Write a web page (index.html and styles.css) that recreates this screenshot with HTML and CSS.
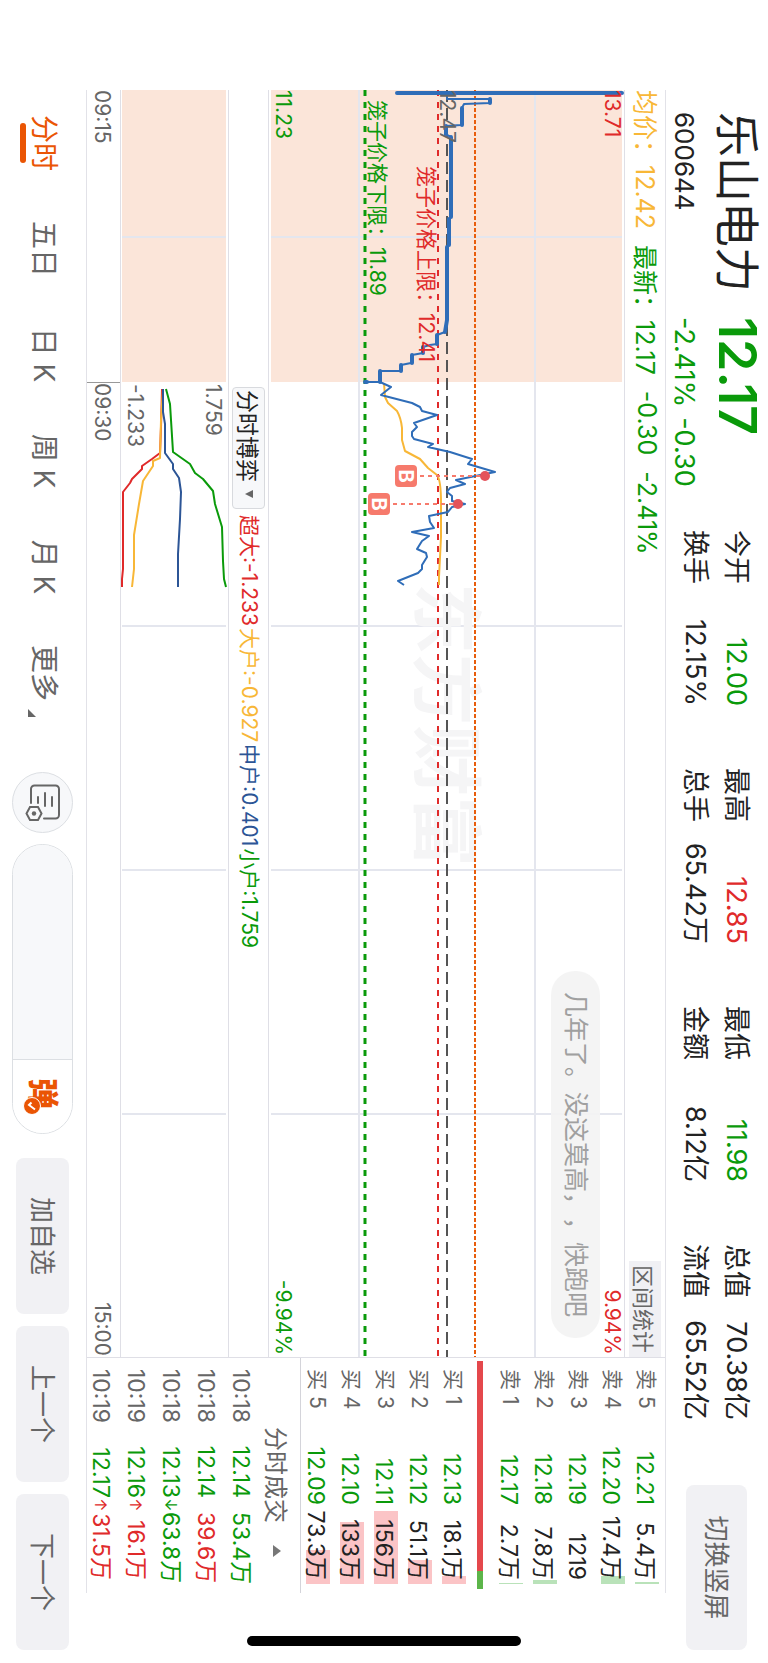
FILE: index.html
```html
<!doctype html>
<html lang="zh-CN">
<head>
  <title>乐山电力 600644</title>
  <meta charset="utf-8" />
  <meta name="viewport" content="width=device-width,initial-scale=1" />

  <link rel="stylesheet" href="styles.css">
</head>
<body>
  <div class="screen">
    <header class="header">
      <div class="quote">
        <h1 class="name">乐山电力</h1>
        <strong class="price down">12.17</strong>
        <span class="code">600644</span>
        <span class="change down"><span>-2.41%</span><span>-0.30</span></span>
      </div>

      <dl class="stats">
        <div><dt>今开</dt><dd class="down">12.00</dd></div>
        <div><dt>最高</dt><dd class="up">12.85</dd></div>
        <div><dt>最低</dt><dd class="down">11.98</dd></div>
        <div><dt>总值</dt><dd>70.38亿</dd></div>
        <div><dt>换手</dt><dd>12.15%</dd></div>
        <div><dt>总手</dt><dd>65.42万</dd></div>
        <div><dt>金额</dt><dd>8.12亿</dd></div>
        <div><dt>流值</dt><dd>65.52亿</dd></div>
      </dl>

      <button type="button" class="btn btn-rotate">切换竖屏</button>
    </header>

    <main class="main">
      <section class="charts">
        <div class="legend">
          <span class="avg">均价：12.42</span>
          <span class="down">最新：12.17</span>
          <span class="down">-0.30</span>
          <span class="down">-2.41%</span>
          <button type="button" class="btn-range">区间统计</button>
        </div>

        <div class="chart price-chart">
          <svg viewBox="0 0 1267 355" preserveAspectRatio="none" aria-hidden="true">
            <rect class="auction" x="0" y="2" width="292" height="351" />
            <path class="grid" d="M0 89H1267M0 265H1267M147 2V353M536 2V353M780 2V353M1024 2V353" />
            <text class="watermark" x="493" y="203">东方财富</text>
            <path class="limit-orange" d="M0 149H1267" />
            <path class="limit-red" d="M0 186H1267" />
            <path class="prev-close" d="M0 177H1267" />
            <path class="limit-green" d="M0 259H1267" />
            <path class="line avg-line" d="M293 240L307 239L313 236L321 227Q328 223 338 222L350 222L361 219L369 204L378 196L385 187Q390 183 413 183L447 183L487 185L495 185" />
            <path class="line blue" d="M4 177H9V134H13L14 160L18 162L35 163L36 178L45 177L47 173H127L129 175L155 176L157 177H230L242 179L245 187H254L255 194L257 201H263L265 212L273 213L275 223H281V244H292V259" />
            <path class="line blue thick" d="M3 2V227M9 134H13M18 162H35M36 178H45M47 173H127M129 175H155M157 177H230L242 179M245 187H254M257 201H263M265 212H273M275 223H281M281 244H292M292 257V259" />
            <path class="line blue" d="M292 244L297 233L305 243L313 212L317 204L321 202L325 187L333 210L337 207L342 212L346 212L349 210L354 191L357 196L362 174L369 152L374 156L382 129L390 168L394 159L398 174L402 177L406 172L411 172L414 159L417 172L422 176L426 195L432 194L438 190L442 212L446 195L451 202L459 207L463 198L467 197L475 202L479 202L483 206L491 226L495 220" />
            <g class="mark">
              <path d="M386 144V206M414 171V233" />
              <circle cx="386" cy="139" r="5" />
              <circle cx="414" cy="166" r="5" />
              <rect x="375" y="207" width="22" height="22" rx="4" />
              <rect x="403" y="234" width="22" height="22" rx="4" />
              <text x="386" y="225">B</text>
              <text x="414" y="252">B</text>
            </g>
          </svg>
          <span class="label top-left up">13.71</span>
          <span class="label top-right up">9.94%</span>
          <span class="label bottom-left down">11.23</span>
          <span class="label bottom-right down">-9.94%</span>
          <span class="label close-price">12.47</span>
          <span class="label cage-high up">笼子价格上限：12.41</span>
          <span class="label cage-low down">笼子价格下限：11.89</span>
          <p class="bullet">几年了。没这莫高，，快跑吧</p>
        </div>

        <div class="legend sub-legend">
          <button type="button" class="btn-index">分时博弈 <i class="caret"></i></button>
          <span class="up">超大:-1.233</span>
          <span class="avg">大户:-0.927</span>
          <span class="mid">中户:0.401</span>
          <span class="down">小户:1.759</span>
        </div>

        <div class="chart flow-chart">
          <svg viewBox="0 0 1267 107" preserveAspectRatio="none" aria-hidden="true">
            <rect class="auction" x="0" y="2" width="292" height="104" />
            <path class="grid" d="M147 2V106M536 2V106M780 2V106M1024 2V106" />
            <path class="line red" d="M299 66L337 67L363 68L369 76L376 86H379L389 96L393 98L402 105H479L489 106H497" />
            <path class="line avg-line" d="M299 65L330 67L368 68L371 75H376L391 85L414 89L445 94H479L497 96" />
            <path class="line navy" d="M299 65H322L334 63H363L374 55H379L388 49L402 47L429 48L464 50H497" />
            <path class="line green" d="M299 62L314 58L362 55L374 38L383 33L389 25L401 15L414 13L437 6L471 5L489 4L497 2" />
          </svg>
          <span class="label flow-high">1.759</span>
          <span class="label flow-low">-1.233</span>
        </div>

        <div class="axis">
          <span>09:15</span>
          <span class="open">09:30</span>
          <span class="close">15:00</span>
        </div>
      </section>

      <aside class="side">
        <table class="book">
          <tr><th>卖 5</th><td class="down">12.21</td><td class="vol ask" style="--depth:2px">5.4万</td></tr>
          <tr><th>卖 4</th><td class="down">12.20</td><td class="vol ask" style="--depth:8px">17.4万</td></tr>
          <tr><th>卖 3</th><td class="down">12.19</td><td class="vol ask" style="--depth:0px">1219</td></tr>
          <tr><th>卖 2</th><td class="down">12.18</td><td class="vol ask" style="--depth:4px">7.8万</td></tr>
          <tr><th>卖 1</th><td class="down">12.17</td><td class="vol ask" style="--depth:1px">2.7万</td></tr>
        </table>
        <div class="ratio"></div>
        <table class="book">
          <tr><th>买 1</th><td class="down">12.13</td><td class="vol bid" style="--depth:8px">18.1万</td></tr>
          <tr><th>买 2</th><td class="down">12.12</td><td class="vol bid" style="--depth:24px">51.1万</td></tr>
          <tr><th>买 3</th><td class="down">12.11</td><td class="vol bid" style="--depth:73px">156万</td></tr>
          <tr><th>买 4</th><td class="down">12.10</td><td class="vol bid" style="--depth:62px">133万</td></tr>
          <tr><th>买 5</th><td class="down">12.09</td><td class="vol bid" style="--depth:34px">73.3万</td></tr>
        </table>

        <h2 class="trades-title">分时成交 <i class="caret caret-up"></i></h2>
        <table class="trades">
          <tr><th>10:18</th><td class="down">12.14</td><td class="dir"></td><td class="down">53.4万</td></tr>
          <tr><th>10:18</th><td class="down">12.14</td><td class="dir"></td><td class="up">39.6万</td></tr>
          <tr><th>10:18</th><td class="down">12.13</td><td class="dir down">↓</td><td class="down">63.8万</td></tr>
          <tr><th>10:19</th><td class="down">12.16</td><td class="dir up">↑</td><td class="up">16.1万</td></tr>
          <tr><th>10:19</th><td class="down">12.17</td><td class="dir up">↑</td><td class="up">31.5万</td></tr>
        </table>
      </aside>
    </main>

    <footer class="footer">
      <nav class="tabs">
        <a href="#" class="active">分时</a>
        <a href="#">五日</a>
        <a href="#">日 K</a>
        <a href="#">周 K</a>
        <a href="#">月 K</a>
        <a href="#" class="more">更多</a>
      </nav>

      <button type="button" class="btn-note" aria-label="弹幕设置">
        <svg viewBox="0 0 37 36" width="37" height="36" aria-hidden="true">
          <path d="M19 30H5a3.5 3.5 0 0 1-3.5-3.5V5.5A3.5 3.5 0 0 1 5 2H31a3.5 3.5 0 0 1 3.5 3.5V17M13 9h9M9 16h13M13 23h6" />
          <path d="M29.500 19.500L36 23V31L29.500 34.500L23 31V23Z" />
          <circle cx="29.500" cy="27" r="2.200" />
        </svg>
      </button>

      <form class="barrage">
        <input type="text" aria-label="发弹幕">
        <button type="button" aria-label="弹幕开关">
          <span class="barrage-icon">弹<svg viewBox="0 0 18 18" width="18" height="18" aria-hidden="true"><circle cx="9" cy="9" r="8.500" /><path d="M5.500 9.500L8 12L12.500 6" /></svg></span>
        </button>
      </form>

      <div class="actions">
        <button type="button" class="btn">加自选</button>
        <button type="button" class="btn">上一个</button>
        <button type="button" class="btn">下一个</button>
      </div>
    </footer>

    <div class="home-bar"></div>
  </div>
</body>
</html>
```
FILE: styles.css
```css
* {
  box-sizing: border-box;
}

html,
body {
  margin: 0;
  padding: 0;
  height: 100%;
  overflow: hidden;
  background: #fff;
}

body,
button,
input {
  font-family: Inter, "Noto Sans CJK SC", sans-serif;
  color: #222;
}

h1, h2, p, dl, dd {
  margin: 0;
  font-weight: normal;
}

button {
  border: 0;
  padding: 0 0 4px;
  color: #666;
}

/* landscape screen, turned to fit a portrait window */
.screen {
  position: relative;
  display: grid;
  grid-template-columns: minmax(0, 1fr);
  grid-template-rows: 102px minmax(0, 1fr) 86px;
  width: 100vh;
  height: 100vw;
  transform-origin: top left;
  transform: rotate(90deg) translateY(-100%);
}

.up { color: #e02a2a }
.down { color: #0a9a0a }
.avg { color: #f8b737 }
.mid { color: #2c5596 }

.btn {
  background: #f1f1f4;
  border-radius: 8px;
  font-size: 26px;
}

/* header */

.header {
  display: grid;
  grid-template-columns: 418px 1fr 165px;
  padding: 0 13px 0 112px;
}

.quote {
  display: grid;
  grid-template-columns: 205px 1fr;
  grid-template-rows: 64px 38px;
  font-size: 27px;
  line-height: 40px;
}

.name {
  font-size: 45px;
  line-height: 64px;
}

.price {
  font-size: 52px;
  line-height: 62px;
  font-weight: 600;
}

.code { font-size: 26px }

.change {
  display: flex;
  gap: 10px;
}

.stats {
  display: grid;
  grid-template-columns: repeat(4, 1fr);
  column-gap: 62px;
  align-content: start;
  padding-top: 11px;
  margin-right: 65px;
  font-size: 27px;
  line-height: 41px;
}

.stats div {
  display: flex;
  justify-content: space-between;
}

.btn-rotate {
  height: 61px;
  margin-top: 21px;
}

/* charts */

.main {
  display: grid;
  grid-template-columns: minmax(0, 1fr) 236px;
  grid-template-rows: minmax(0, 1fr);
  margin: 0 70px 0 90px;
  border-top: 1px solid #e2e2e8;
  border-bottom: 1px solid #e2e2e8;
}

.charts {
  display: grid;
  grid-template-columns: minmax(0, 1fr);
  grid-template-rows: 41px minmax(0, 1fr) 40px 108px 33px;
}

.legend {
  display: flex;
  align-items: center;
  gap: 16px;
  border-bottom: 1px solid #dfdfe6;
  font-size: 25px;
  white-space: nowrap;
}

.legend span { padding-bottom: 5px }

.btn-range {
  margin-left: auto;
  height: 32px;
  padding: 0 4px 3px;
  background: #f0f0f4;
  font-size: 22px;
}

.sub-legend {
  gap: 2px;
  padding-left: 297px;
  font-size: 21px;
}

.btn-index {
  display: flex;
  align-items: center;
  justify-content: space-between;
  width: 122px;
  height: 33px;
  margin-right: 4px;
  padding: 0 10px 1px 2px;
  background: #f7f8fa;
  border: 1px solid #d8dade;
  border-radius: 4px;
  font-size: 23px;
  color: #222;
}

.caret {
  border: 4px solid transparent;
  border-top: 8px solid #666;
  border-bottom: 0;
}

.caret-up {
  border: 6px solid transparent;
  border-bottom: 8px solid #777;
  border-top: 0;
}

.chart {
  position: relative;
  border-bottom: 1px solid #dfdfe6;
}

.chart svg {
  display: block;
  width: 100%;
  height: 100%;
}

.auction { fill: #fbe5d9 }

.grid {
  fill: none;
  stroke: #e4e6ee;
  stroke-width: 2;
}

.line {
  fill: none;
  stroke-width: 2;
  stroke-linejoin: round;
}

.blue { stroke: #2f6db8 }
.thick { stroke-width: 4; stroke-linecap: round }
.avg-line { stroke: #f8b737 }
.navy { stroke: #2c5596 }
.red { stroke: #e02a2a }
.green { stroke: #0a9a0a }

.limit-orange,
.limit-red,
.limit-green,
.prev-close {
  stroke-width: 2;
}

.limit-orange { stroke: #e85d0c; stroke-dasharray: 4 2 }
.limit-red { stroke: #e02a2a; stroke-dasharray: 6 6 }
.limit-green { stroke: #0a9a0a; stroke-dasharray: 6 6; stroke-width: 3 }
.prev-close { stroke: #555; stroke-dasharray: 12 6 }

.watermark {
  fill: #f5f5f6;
  font-size: 71px;
  font-weight: bold;
}

.mark { fill: #f67a6c }
.mark path { stroke: #f67a6c; stroke-width: 2; stroke-dasharray: 4 4 }
.mark circle { fill: #e4535a }

.mark text {
  fill: #fff;
  font-size: 20px;
  font-weight: bold;
  text-anchor: middle;
}

.label {
  position: absolute;
  font-size: 21px;
  line-height: 24px;
  white-space: nowrap;
}

.top-left { left: 0; top: 0 }
.top-right { right: 2px; top: 0 }
.bottom-left { left: 0; bottom: 2px }
.bottom-right { right: 2px; bottom: 2px }
.close-price { left: 0; top: 165px; color: #666 }
.cage-high { left: 76px; top: 186px }
.cage-low { left: 10px; top: 235px }
.flow-high { left: 294px; top: 3px; color: #666 }
.flow-low { left: 294px; bottom: 2px; color: #666 }

.bullet {
  position: absolute;
  top: 24px;
  right: 19px;
  height: 49px;
  padding: 0 21px;
  border-radius: 24px;
  background: rgba(243, 243, 243, 0.9);
  color: #a0a0a0;
  font-size: 25px;
  line-height: 49px;
  white-space: nowrap;
  text-spacing-trim: space-all;
}

.axis {
  display: flex;
  font-size: 21px;
  line-height: 36px;
  color: #666;
}

.axis span:first-child { width: 292px }

.axis .open {
  border-left: 1px solid #999;
}

.axis .close {
  margin-left: auto;
  padding-right: 1px;
}

/* order book and trades */

.side {
  padding-top: 1px;
  border-left: 1px solid #dfdfe6;
}

.side table {
  width: 215px;
  margin-left: 11px;
  border-collapse: collapse;
  table-layout: fixed;
  white-space: nowrap;
  font-size: 23px;
}

.side th {
  padding: 2px 0 0;
  text-align: left;
  font-weight: normal;
  color: #666;
}

.side td {
  padding: 4px 0 0;
  text-align: right;
}

.book tr { height: 34px }
.book th { width: 60px; font-size: 21px; line-height: 32px }
.book td { line-height: 30px }

.side .vol {
  width: 79px;
  padding-right: 4px;
  background-position: right center;
  background-repeat: no-repeat;
  background-size: var(--depth) 24px;
}

.ask { background-image: linear-gradient(#b9e2b9, #b9e2b9) }
.bid { background-image: linear-gradient(#fbc4c6, #fbc4c6) }

.ratio {
  height: 6px;
  margin: 11px 4px 6px 3px;
  background: linear-gradient(90deg, #e4484c 92%, #5cb54a 92%);
}

.trades-title {
  display: flex;
  align-items: center;
  justify-content: space-between;
  height: 41px;
  padding: 5px 36px 0 69px;
  border-top: 1px solid #d4d4da;
  font-size: 24px;
  color: #666;
}

.trades tr { height: 35px }
.trades td, .trades th { padding-top: 4px; line-height: 31px }
.trades th { width: 66px }
.trades .dir { width: 14px; font-size: 16px; text-align: center }
.trades td:last-child { width: 72px; padding-right: 4px }

/* footer */

.footer {
  display: flex;
  align-items: center;
  padding: 0 13px 0 90px;
}

.tabs {
  display: grid;
  grid-template-columns: repeat(6, 106px);
  margin-right: 46px;
  font-size: 28px;
  text-align: center;
}

.tabs a {
  position: relative;
  padding-bottom: 2px;
  line-height: 44px;
  color: #666;
  text-decoration: none;
}

.tabs .active { color: #ea5504 }

.tabs .active::after {
  content: "";
  position: absolute;
  left: 33px;
  right: 33px;
  bottom: 0;
  height: 6px;
  border-radius: 3px;
  background: #ea5504;
}

.more::after {
  content: "";
  position: absolute;
  right: 9px;
  bottom: 8px;
  border: 4px solid #666;
  border-top-color: transparent;
  border-left-color: transparent;
}

.btn-note {
  display: flex;
  align-items: center;
  justify-content: center;
  width: 61px;
  height: 61px;
  padding: 0;
  border: 1px solid #dcdfe3;
  border-radius: 50%;
  background: #f7f8fa;
}

.btn-note path {
  fill: none;
  stroke: #666;
  stroke-width: 2;
  stroke-linecap: round;
}

.btn-note circle { fill: #666 }

.barrage {
  display: flex;
  flex: 1;
  height: 61px;
  margin: 0 24px 0 11px;
  border: 1px solid #dcdfe3;
  border-radius: 31px;
  overflow: hidden;
}

.barrage input {
  flex: 1;
  min-width: 0;
  border: 0;
  border-right: 1px solid #dcdfe3;
  background: #f7f8fa;
  padding: 0 24px;
  font-size: 24px;
}

.barrage button {
  width: 73px;
  padding-bottom: 6px;
  background: #fff;
}

.barrage-icon {
  position: relative;
  padding-right: 6px;
  color: #ea5504;
  font-size: 31px;
  font-weight: 900;
}

.barrage-icon svg {
  position: absolute;
  right: 0;
  bottom: -2px;
  fill: #ea5504;
}

.barrage-icon circle { stroke: #fff }

.barrage-icon path {
  fill: none;
  stroke: #fff;
  stroke-width: 2;
}

.actions {
  display: grid;
  grid-template-columns: repeat(3, 156px);
  gap: 12px;
}

.actions .btn { height: 53px }

.home-bar {
  position: absolute;
  right: 17px;
  top: 247px;
  width: 10px;
  height: 274px;
  border-radius: 5px;
  background: #000;
}
```
